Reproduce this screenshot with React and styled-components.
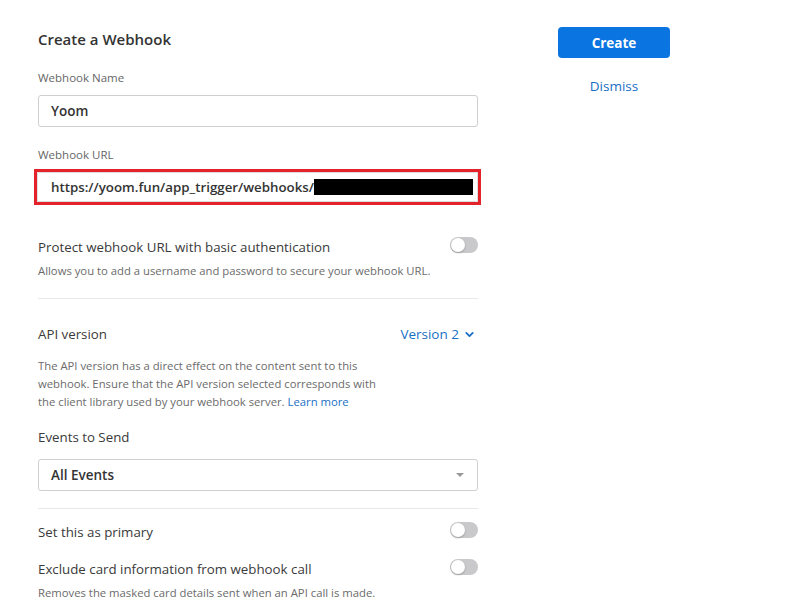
import React from 'react'
import styled, { createGlobalStyle } from 'styled-components'

const Global = createGlobalStyle`
  html, body {
    margin: 0;
    padding: 0;
    background: #fff;
  }
  body {
    font-family: 'Open Sans', 'Noto Sans', sans-serif;
    color: #333;
  }
`

const Toggle = ({ on }) => (
  <Switch $on={on}>
    <Knob $on={on} />
  </Switch>
)

const ToggleRow = ({ label, hint, spacing }) => (
  <Block $spacing={spacing}>
    <Row>
      <RowLabel>{label}</RowLabel>
      <Toggle />
    </Row>
    {hint && <Hint>{hint}</Hint>}
  </Block>
)

const App = () => {
  return (
    <Page>
      <Global />
      <Left>
        <Title>Create a Webhook</Title>
        <FieldLabel>Webhook Name</FieldLabel>
        <TextBox>Yoom</TextBox>

        <FieldLabel>Webhook URL</FieldLabel>
        <Highlight>
          <TextBox $flat>
            https://yoom.fun/app_trigger/webhooks/
            <Redacted />
          </TextBox>
        </Highlight>

        <ToggleRow
          spacing={32}
          label='Protect webhook URL with basic authentication'
          hint='Allows you to add a username and password to secure your webhook URL.'
        />
        <Divider />

        <Row $top={25}>
          <RowLabel>API version</RowLabel>
          <VersionPick>
            Version 2
            <svg width='11' height='11' viewBox='0 0 12 12'>
              <path
                d='M2.5 4.2 L6 7.7 L9.5 4.2'
                fill='none'
                stroke='#1a6fc4'
                strokeWidth='2'
                strokeLinecap='round'
                strokeLinejoin='round'
              />
            </svg>
          </VersionPick>
        </Row>
        <Para>
          The API version has a direct effect on the content sent to this
          webhook. Ensure that the API version selected corresponds with the
          client library used by your webhook server. <A>Learn more</A>
        </Para>

        <SubTitle>Events to Send</SubTitle>
        <SelectBox>
          All Events
          <Caret />
        </SelectBox>
        <Divider $top={17} />

        <ToggleRow spacing={13} label='Set this as primary' />
        <ToggleRow
          spacing={17}
          label='Exclude card information from webhook call'
          hint='Removes the masked card details sent when an API call is made.'
        />
      </Left>

      <Right>
        <CreateButton>Create</CreateButton>
        <DismissLink>Dismiss</DismissLink>
      </Right>
    </Page>
  )
}

export default App

//styles

const Page = styled.div`
  display: flex;
  align-items: flex-start;
  gap: 80px;
  padding: 27px 0 0 38px;
  width: 794px;
  height: 613px;
  box-sizing: border-box;
  overflow: hidden;
`
const Left = styled.div`
  width: 440px;
  display: flex;
  flex-direction: column;
`
const Right = styled.div`
  width: 112px;
  display: flex;
  flex-direction: column;
  align-items: center;
`
const Title = styled.div`
  font-size: 15px;
  font-weight: 600;
  color: #333;
  line-height: 24px;
  margin-bottom: 19px;
`
const FieldLabel = styled.div`
  font-size: 11.5px;
  color: #666;
  line-height: 16px;
  margin-bottom: 9px;
`
const TextBox = styled.div`
  height: ${p => (p.$flat ? 30 : 32)}px;
  box-sizing: border-box;
  border: 1px solid ${p => (p.$flat ? '#ddd' : '#cfcfcf')};
  border-radius: ${p => (p.$flat ? 0 : 3)}px;
  padding: ${p => (p.$flat ? '0 4px 0 13px' : '0 12px')};
  display: flex;
  align-items: center;
  font-size: ${p => (p.$flat ? 13.3 : 13.5)}px;
  font-weight: 600;
  color: #333;
  margin-bottom: ${p => (p.$flat ? 0 : 20)}px;
  white-space: nowrap;
  overflow: hidden;
`
const Highlight = styled.div`
  margin: -3px -3px 0 -4px;
  border: 3px solid #e3222a;
`
const Redacted = styled.span`
  display: inline-block;
  flex-shrink: 0;
  width: 159px;
  height: 16px;
  background: #000;
`
const Block = styled.div`
  margin-top: ${p => p.$spacing}px;
`
const Row = styled.div`
  display: flex;
  align-items: center;
  justify-content: space-between;
  margin-top: ${p => (p.$top ? p.$top : 0)}px;
  height: 20px;
`
const RowLabel = styled.div`
  font-size: 13.3px;
  color: #3a3a3a;
`
const Hint = styled.div`
  font-size: 11.3px;
  color: #6b6b6b;
  margin-top: 6px;
  line-height: 16px;
`
const Switch = styled.div`
  width: 28px;
  height: 16px;
  border-radius: 8px;
  background: ${p => (p.$on ? '#0a74da' : '#c9c9cc')};
  position: relative;
  flex-shrink: 0;
  margin-top: -4px;
`
const Knob = styled.div`
  position: absolute;
  top: 1px;
  left: ${p => (p.$on ? '13px' : '1px')};
  width: 14px;
  height: 14px;
  border-radius: 50%;
  background: #fff;
  box-shadow: 0 1px 2px rgba(0, 0, 0, 0.25);
`
const Divider = styled.div`
  height: 1px;
  background: #e8e8e8;
  margin-top: ${p => (p.$top ? p.$top : 19)}px;
`
const VersionPick = styled.div`
  display: flex;
  align-items: center;
  gap: 5px;
  font-size: 13.5px;
  color: #1a6fc4;
  margin-right: 3px;
`
const Para = styled.p`
  margin: 13px 0 0;
  width: 345px;
  font-size: 11.3px;
  line-height: 18px;
  color: #6b6b6b;
`
const A = styled.span`
  color: #1a6fc4;
`
const SubTitle = styled.div`
  font-size: 13.3px;
  color: #3a3a3a;
  margin-top: 16px;
  line-height: 20px;
`
const SelectBox = styled.div`
  margin-top: 12px;
  height: 32px;
  box-sizing: border-box;
  border: 1px solid #cfcfcf;
  border-radius: 3px;
  padding: 0 12px;
  display: flex;
  align-items: center;
  justify-content: space-between;
  font-size: 13.5px;
  font-weight: 600;
  color: #333;
`
const Caret = styled.span`
  width: 0;
  height: 0;
  border-left: 4px solid transparent;
  border-right: 4px solid transparent;
  border-top: 4px solid #999;
  margin-right: 1px;
`
const CreateButton = styled.button`
  width: 112px;
  height: 31px;
  border: none;
  border-radius: 4px;
  background: #0a74e0;
  color: #fff;
  font-family: inherit;
  font-size: 13.5px;
  font-weight: 700;
  cursor: pointer;
`
const DismissLink = styled.div`
  margin-top: 19px;
  font-size: 13.5px;
  color: #1a6fc4;
`
